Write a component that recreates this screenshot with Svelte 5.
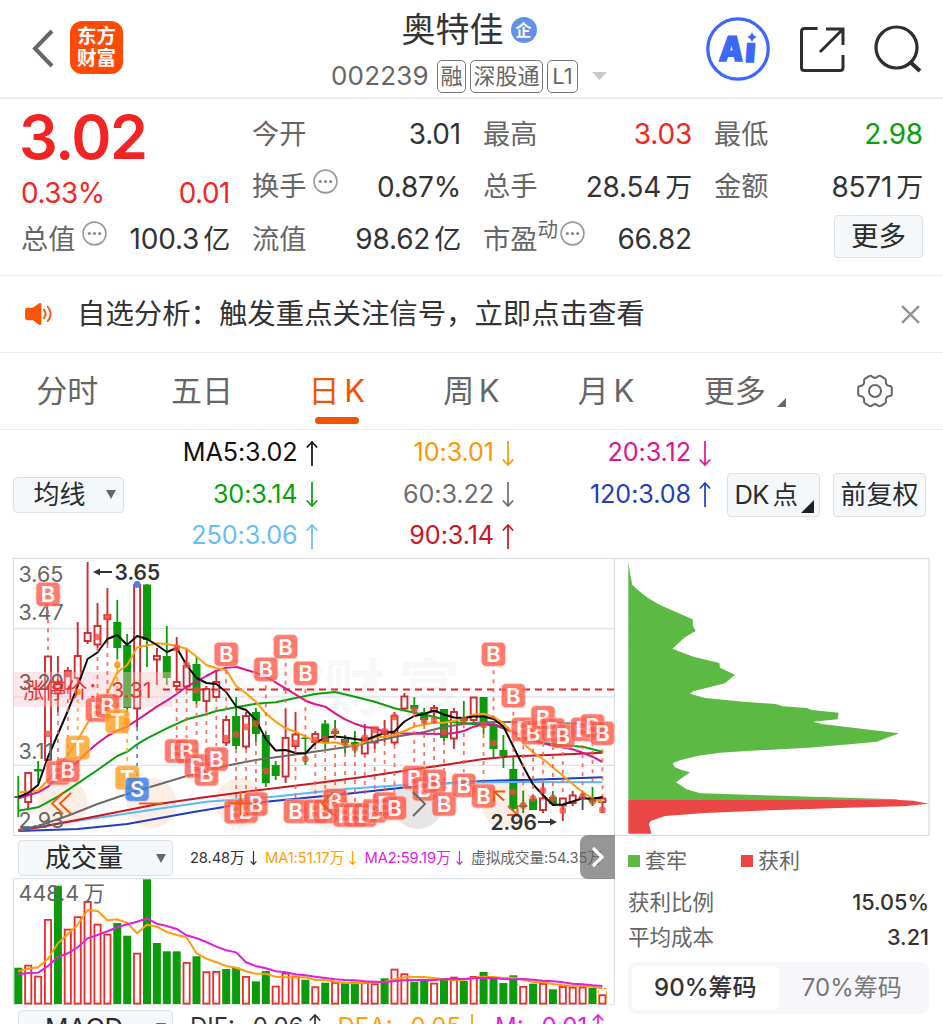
<script>
	const quotes = [
		{ label: '今开', value: '3.01' },
		{ label: '最高', value: '3.03', tone: 'up' },
		{ label: '最低', value: '2.98', tone: 'down' },
		{ label: '换手', value: '0.87%', hint: true },
		{ label: '总手', value: '28.54', unit: '万' },
		{ label: '金额', value: '8571', unit: '万' },
		{ label: '流值', value: '98.62', unit: '亿' },
		{ label: '市盈', sup: '动', value: '66.82', hint: true }
	];

	const tabs = ['分时', '五日', '日 K', '周 K', '月 K', '更多'];
	let activeTab = $state(2);
	let chipRange = $state(90);

	const averages = [
		{ text: 'MA5:3.02', up: true, color: '#111111' },
		{ text: '10:3.01', up: false, color: '#ff9500' },
		{ text: '20:3.12', up: false, color: '#e0148c' },
		{ text: '30:3.14', up: false, color: '#0aa00a' },
		{ text: '60:3.22', up: false, color: '#6e6e6e' },
		{ text: '120:3.08', up: true, color: '#1f3cc4' },
		{ text: '250:3.06', up: true, color: '#66bdfa' },
		{ text: '90:3.14', up: true, color: '#cc1522' }
	];

	const x = (i) => 18.3 + 9.9 * i;

	// [color, high, top, bottom, low]
	const candles = [
		['g', 776, 796, 798, 817], ['r', 772, 773, 802, 808], ['g', 761, 769, 771.5, 783], ['r', 656, 656.5, 760, 760],
		['r', 656, 682, 693, 712], ['r', 667, 671, 689, 690], ['r', 622, 656, 678, 681], ['r', 562, 633, 641, 644],
		['r', 603, 626, 644.5, 648], ['r', 588, 615, 619, 644], ['g', 600, 622, 648, 659], ['g', 634, 645, 708, 712],
		['r', 584, 585, 708.5, 727], ['g', 584, 584.5, 640, 667], ['r', 648, 656, 659.5, 685], ['g', 626, 656, 678, 685],
		['r', 637, 682, 686, 690], ['r', 649, 666, 686.5, 690], ['g', 656, 664, 701, 704], ['r', 686, 689, 701, 712],
		['r', 671, 682, 697, 698], ['r', 716, 720, 742.5, 746], ['g', 697, 716, 746, 749], ['r', 712, 716, 746.5, 749],
		['g', 708, 712, 734, 742], ['g', 732, 735, 783, 787], ['g', 761, 765, 776, 780], ['r', 709, 738, 776.5, 783],
		['r', 712, 734.5, 746, 749], ['g', 735, 737.5, 739, 765], ['r', 731, 734, 742, 745], ['g', 720, 723.5, 742, 749],
		['g', 720, 731, 734, 736], ['g', 735, 739, 743, 753], ['g', 731, 742, 746.5, 753], ['r', 724, 738, 753.5, 754],
		['r', 727, 727.5, 742.5, 749], ['r', 720, 731, 734, 742], ['r', 712, 716, 742.5, 745], ['r', 693, 696.5, 708.5, 710],
		['g', 697, 705, 709, 713], ['g', 708, 712, 720, 725], ['r', 705, 708, 711.5, 720], ['g', 709, 709, 738, 741],
		['r', 708, 712, 738.5, 749], ['g', 701, 718, 721, 724], ['r', 697, 697.5, 720, 723], ['g', 697, 697, 724, 734],
		['g', 723, 724, 749, 757], ['g', 735, 750, 756, 768], ['g', 757, 769, 809, 810], ['g', 791, 805, 807, 813],
		['g', 796, 799, 810, 810], ['r', 783, 798.5, 810, 813], ['g', 791, 797, 804, 806], ['r', 798, 798.5, 805.5, 821],
		['r', 791, 795.5, 803, 806], ['k', 793, 797, 798.5, 810], ['g', 787, 797, 802, 806], ['r', 796, 798.5, 802, 813]
	];

	const ma5 = [
		797, 793, 785, 757, 734, 711, 686, 659, 652.5, 639, 635, 645, 636, 639, 645, 652, 648, 665, 678, 683, 684, 692, 706.5,
		710, 720, 739, 750.5, 750, 753, 753.5, 743, 737.5, 736.5, 737.5, 739, 740.3, 736.5, 733, 731.5, 721.5, 716, 714, 710.5,
		714.5, 717.5, 718, 716.5, 716.5, 719, 726.5, 746.5, 766.5, 784.5, 795, 805, 804.5, 801.5, 798.3, 799, 797
	];
	const ma10 = [
		792.5, 791.5, 790.5, 780, 767, 755, 740, 723, 708, 693, 672.5, 665, 647.5, 645.5, 643.3, 644, 646, 648.7, 656.7, 665,
		668.3, 670, 686, 693.3, 701.7, 713.3, 721.7, 728.3, 731.7, 736.7, 741, 743.3, 742.3, 745, 745.7, 741.7, 737.3, 736.7,
		735, 731, 726.5, 724.5, 722.7, 722.7, 720.7, 718.3, 714.7, 713.7, 716.7, 723.3, 733.3, 743.3, 752.3, 759, 767.3, 775.7,
		784, 792.3, 798.3, 801.7
	];

	const every = (ys) => ys.map((y, i) => `${x(i)},${y}`).join(' ');
	const sparse = (pairs) => pairs.map(([i, y]) => `${x(i)},${y}`).join(' ');

	const lines = [
		{ color: '#1f3cc4', points: sparse([[0, 831], [6, 829], [11, 824], [16, 815], [18, 811.5], [22, 805], [26, 800.7], [33, 794], [39, 787.5], [43, 783.5], [47, 781], [52, 779.7], [59, 777.3]]) },
		{ color: '#5bb8f8', points: sparse([[0, 830.5], [5, 822], [10, 815], [14, 809], [19, 801.7], [26, 796.5], [33, 789], [39, 785], [43, 783.3], [50, 782], [59, 782.3]]) },
		{ color: '#c81624', points: sparse([[0, 830], [2, 827.5], [8, 816], [14, 804.3], [19, 797], [24, 790.5], [30, 783.3], [35, 776.7], [39, 770.7], [43, 765], [47, 759], [50, 756.3], [53, 755.3], [59, 752.7]]) },
		{ color: '#6b6b6b', points: sparse([[0, 830], [2, 826], [5, 815.7], [8, 804], [10, 797.3], [12, 790.7], [14, 785], [17, 776], [21, 765.7], [24, 760], [28, 754.5], [33, 747.3], [36, 741.5], [38, 737], [41, 732], [43, 727], [45, 724], [47, 722.3], [50, 722], [55, 723.3], [59, 724]]) },
		{ color: '#0aa00a', points: sparse([[0, 810.7], [2, 807.3], [4, 796.7], [6, 783.3], [8, 770], [10, 756], [11, 751.7], [12, 744.3], [13, 738.3], [15, 728.3], [17, 719.3], [19, 714.3], [20, 711], [22, 707.3], [24, 703.7], [26, 702.3], [28, 698], [30, 694], [32, 692], [34, 696.7], [36, 701.7], [38, 708.3], [40, 712.7], [42, 716.7], [44, 722.3], [46, 724], [48, 725], [49, 728.3], [51, 736.7], [53, 742.7], [55, 745.3], [57, 746.7], [59, 751.7]]) },
		{ color: '#d9148c', points: sparse([[0, 798.3], [2, 792.3], [3, 786.7], [4, 776.7], [6, 761.7], [7, 751.7], [8, 743.3], [9, 736], [10, 730.7], [11, 726.7], [12, 720], [13, 713.3], [14, 706.7], [15, 700.7], [16, 694], [17, 686.7], [18, 681.7], [19, 676], [20, 670.7], [21, 667.7], [22, 666.7], [24, 672.7], [25, 676.7], [27, 688.3], [29, 700.7], [30, 704.3], [31, 706.7], [32, 713.3], [33, 719.3], [34, 723.7], [35, 727], [36, 728.3], [37, 731.7], [38, 733.3], [43, 734], [44, 733], [45, 731], [46, 726.7], [47, 724.3], [48, 724.3], [49, 727.7], [50, 731.7], [51, 736.7], [52, 740.7], [54, 745.7], [56, 749.3], [57, 752.7], [58, 756.7], [59, 762]]) },
		{ color: '#ff9d0a', points: every(ma10) },
		{ color: '#0a0a0a', points: every(ma5) }
	];

	// [candle index, center y, letter]
	const markers = [
		[3, 594.3, 'B'], [4, 773, 'B'], [5, 770, 'B'], [6, 747.7, 'T'], [8, 710, 'B'], [9, 706, 'B'], [10, 721.3, 'T'],
		[11, 777.7, 'T'], [12, 789.3, 'S'], [16, 751, 'B'], [17, 751.3, 'B'], [18, 766, 'B'], [19, 774, 'B'], [20, 759, 'B'],
		[21, 654.3, 'B'], [22, 811.7, 'B'], [23, 811, 'B'], [24, 804, 'B'], [25, 669.3, 'B'], [27, 646.7, 'B'],
		[28, 811.3, 'B'], [29, 673.3, 'B'], [30, 811.3, 'B'], [31, 811.3, 'B'], [32, 800.7, 'B'], [33, 815, 'B'],
		[34, 815, 'B'], [35, 815, 'B'], [36, 811, 'B'], [37, 804, 'B'], [38, 808, 'B'], [40, 777.7, 'B'], [41, 789, 'B'],
		[42, 781.3, 'B'], [43, 804, 'B'], [45, 785.3, 'B'], [47, 796, 'B'], [48, 654.3, 'B'], [50, 695.7, 'B'],
		[51, 729.3, 'B'], [52, 732.7, 'B'], [53, 717.7, 'B'], [54, 730, 'B'], [55, 736, 'B'], [57, 729.3, 'B'],
		[58, 726, 'B'], [59, 733.3, 'B']
	];
	const markerColor = { B: '#ff5a48', T: '#ff9f1c', S: '#2f7df0' };

	function stem([i, y]) {
		const [, high, , , low] = candles[i];
		return y < high ? { y1: y + 16, y2: high } : { y1: low, y2: y - 13 };
	}

	const dots = [
		[3, 734], [5, 674], [8, 637], [9, 617], [16, 648], [17, 665], [18, 690.5], [21, 738], [22, 734.5], [23, 727], [24, 723.5],
		[25, 771], [28, 743], [29, 759], [30, 740], [31, 739], [32, 731.5], [33, 742.5], [34, 748], [35, 738], [36, 730],
		[37, 731.5], [38, 717], [40, 710], [41, 721], [42, 720], [43, 732], [45, 720], [47, 725], [48, 743], [50, 792],
		[51, 805.5], [52, 798.5], [53, 790.5], [54, 798], [55, 810.5], [57, 796.5], [58, 801.5], [59, 810]
	];

	const priceLabels = [
		['3.65', 582], ['3.47', 620.3], ['3.29', 689.7], ['3.11', 758.5], ['2.93', 827.5]
	];

	const volumeTops = [
		967.7, 964.7, 975.7, 919, 885.7, 928.7, 916.3, 901, 923.7, 933.7, 923, 935.7, 952.7, 879.3, 943, 951.3, 951.3, 962,
		956.3, 971.3, 971, 969, 967.7, 976, 981.3, 971, 985.7, 972.7, 975.7, 979.7, 986.3, 982.7, 982, 983.3, 981.7, 982.3,
		983.3, 978.3, 968.7, 973.3, 981.7, 981, 982.7, 978, 976.7, 981, 976, 972, 978.7, 983, 975.3, 986, 983.7, 983, 989.3,
		986, 986.7, 986.7, 988, 994.3
	];
	const volumeColors = 'grrrgrrrrrggrggggrgrrggrggrrrgrgrggrrgrrggrgrgrggggrgrgrrrgr';
	const volumeMa1 = [
		971.3, 968.7, 967.3, 958.7, 943.3, 934.3, 924.7, 910, 911, 920.3, 919.3, 923, 933.3, 924.7, 926.7, 932, 935, 937.3,
		953.3, 958.7, 962.3, 966, 967.7, 971.3, 973.7, 973.7, 976.7, 977.3, 977.3, 977.3, 980, 980, 981.7, 982.7, 983.3, 982.7,
		982.3, 981.7, 979.3, 977.3, 977, 977, 978, 979.3, 980, 979.7, 978, 976.7, 977, 978, 977.7, 979.7, 982, 982.3, 984,
		985.3, 985.7, 986, 986.7, 988.3
	];
	const volumeMa2 = [
		974.3, 973, 972.7, 966, 957, 953.3, 947.3, 938.3, 935, 931.3, 927.3, 924.3, 921.7, 918.3, 923.7, 926, 929, 935.3,
		938.3, 942, 946.7, 950.3, 952.3, 962.3, 966, 968.3, 971.3, 972.3, 974.3, 975.3, 976.7, 978, 979.3, 980, 980.3, 981.3,
		981.7, 982, 981, 980.3, 980, 980, 980, 979.3, 979, 979, 978.3, 977.7, 978, 979, 979.3, 979, 979.7, 980.7, 981.3,
		982.3, 983.7, 984.3, 985.3, 986
	];
</script>

{#snippet arrow(up)}
	<svg class="arrow" class:flip={!up} viewBox="0 0 12 25">
		<path d="M6 25V1M0.8 6.5L6 1l5.2 5.5" />
	</svg>
{/snippet}

{#snippet hint()}
	<svg class="hint" viewBox="0 0 25 25">
		<circle cx="12.5" cy="12.5" r="11.4" fill="none" stroke="#999" stroke-width="1.6" />
		<g fill="#888"><circle cx="7.3" cy="12.5" r="1.6" /><circle cx="12.5" cy="12.5" r="1.6" /><circle cx="17.7" cy="12.5" r="1.6" /></g>
	</svg>
{/snippet}

<div class="page">
	<header class="header">
		<div class="header__left">
			<svg class="back" viewBox="0 0 24 40"><path d="M21 2L4 19.500L21 37" fill="none" stroke="#666" stroke-width="4" /></svg>
			<div class="brand"><span>东方</span><span>财富</span></div>
		</div>
		<div class="header__center">
			<div class="name">奥特佳<span class="name__badge">企</span></div>
			<div class="code">
				<span class="code__num">002239</span>
				<span class="tag">融</span>
				<span class="tag tag--wide">深股通</span>
				<span class="tag tag--level">L1</span>
				<svg class="code__caret" viewBox="0 0 15 8"><path d="M0 0h15L7.500 8z" fill="#c9c9c9" /></svg>
			</div>
		</div>
		<div class="header__right">
			<svg width="64" height="64" viewBox="0 0 64 64">
				<circle cx="32" cy="32" r="30.200" fill="none" stroke="#3b68fb" stroke-width="3.300" />
				<g class="ai">
					<text transform="translate(12.500 44) skewX(-4) scale(0.900 1)">A</text>
					<text transform="translate(38.500 44.500) skewX(-4) scale(1.050 1)">ı</text>
				</g>
				<path d="M46 15q1.200 4 5 5q-3.800 1-5 5q-1.200-4-5-5q3.800-1 5-5z" fill="#3b68fb" />
			</svg>
			<svg width="46" height="46" viewBox="0 0 46 46" fill="none" stroke="#2e2e2e" stroke-width="3">
				<path d="M18.500 2.500H5.500q-3 0-3 3v36q0 3 3 3H41q3 0 3-3V29" />
				<path d="M27 3h17v16M43 4L21 26" />
			</svg>
			<svg width="48" height="48" viewBox="0 0 48 48" fill="none" stroke="#2e2e2e" stroke-width="3.200">
				<circle cx="22.500" cy="22.500" r="20.500" />
				<path d="M35.500 36.500L46 46" stroke-width="4" />
			</svg>
		</div>
	</header>

	<section class="quote">
		<div class="price">
			<strong>3.02</strong>
			<div class="price__change"><span>0.33%</span><span>0.01</span></div>
			<div class="cell">
				<span class="cell__label">总值{@render hint()}</span>
				<span class="cell__value">100.3<i>亿</i></span>
			</div>
		</div>
		<div class="quote__grid">
			{#each quotes as q}
				<div class="cell">
					<span class="cell__label">
						{q.label}{#if q.sup}<sup>{q.sup}</sup>{/if}{#if q.hint}{@render hint()}{/if}
					</span>
					<span class="cell__value {q.tone ?? ''}">{q.value}{#if q.unit}<i>{q.unit}</i>{/if}</span>
				</div>
			{/each}
			<button class="btn btn--more">更多</button>
		</div>
	</section>

	<section class="notice">
		<svg class="notice__horn" viewBox="0 0 30 24">
			<path d="M2.500 5.500H8L14.500 0.800q2.500-1 2.500 1.500v19.400q0 2.500-2.500 1.500L8 18.500H2.500Q0 18.500 0 16V8Q0 5.500 2.500 5.500z" fill="#fb5607" />
			<path d="M19.500 7.500q3.600 4.500 0 9M23.500 4.500q6 7.500 0 15" fill="none" stroke="#fb5607" stroke-width="2" stroke-linecap="round" />
		</svg>
		<p>自选分析：触发重点关注信号，立即点击查看</p>
		<svg class="notice__close" viewBox="0 0 18 18"><path d="M1 1l16 16M17 1L1 17" stroke="#929292" stroke-width="2.200" /></svg>
	</section>

	<nav class="tabs">
		{#each tabs as tab, i}
			<button class="tab" class:is-active={activeTab === i} class:tab--more={tab === '更多'} onclick={() => (activeTab = i)}>
				{tab}
				{#if tab === '更多'}
					<svg class="tab__corner" viewBox="0 0 9 9"><path d="M9 0v9H0z" fill="#666" /></svg>
				{/if}
			</button>
		{/each}
		<div class="tab tab--gear">
			<svg width="36" height="34" viewBox="0 0 36 34" fill="none" stroke="#666" stroke-width="2">
				<path d="M12.200 2.200Q13.800 1 15 2.600Q18 5.200 21 2.600Q22.200 1 23.800 2.200L28 4.700Q29.300 5.600 28.800 7.500Q28.800 11.500 32.800 12Q34.800 12.300 34.800 14V20Q34.800 21.700 32.800 22Q28.800 22.500 28.800 26.500Q29.300 28.400 28 29.300L23.800 31.800Q22.200 33 21 31.400Q18 28.800 15 31.400Q13.800 33 12.200 31.800L8 29.300Q6.700 28.400 7.200 26.500Q7.200 22.500 3.200 22Q1.200 21.700 1.200 20V14Q1.200 12.300 3.200 12Q7.200 11.500 7.200 7.500Q6.700 5.600 8 4.700Z" />
				<circle cx="18" cy="17" r="6" />
			</svg>
		</div>
	</nav>

	<section class="ma">
		<button class="btn btn--ma">均线<span class="caret"></span></button>
		<div class="ma__grid">
			{#each averages as a}
				<span class="ma__item" style={`color: ${a.color}`}>{a.text}{@render arrow(a.up)}</span>
			{/each}
		</div>
		<button class="btn btn--tool btn--dk">DK 点<span class="corner"></span></button>
		<button class="btn btn--tool">前复权</button>
	</section>

	<div class="charts">
		<div class="charts__main">
			<svg class="kline" viewBox="13 558 602 278">
				<rect x="13.500" y="558.500" width="601" height="277" fill="#fff" stroke="#dadee4" />
				<g class="watermark">
					<circle cx="189" cy="706" r="19" />
					<text x="206" y="711">东</text>
					<text x="264" y="711">方</text>
					<text x="323" y="711">财</text>
					<text x="398" y="711">富</text>
				</g>
				<g stroke="#dfe3ec" stroke-width="1.300">
					<line x1="14" x2="614" y1="628.500" y2="628.500" />
					<line x1="14" x2="614" y1="696.800" y2="696.800" />
					<line x1="14" x2="614" y1="765.400" y2="765.400" />
				</g>
				<g fill="#fdeee5">
					<circle cx="62.500" cy="803" r="25" />
					<circle cx="151.500" cy="803" r="25" />
					<circle cx="240.500" cy="803" r="25" />
					<circle cx="329.500" cy="803" r="25" />
					<circle cx="506" cy="803" r="25" />
					<circle cx="418" cy="804" r="25" fill="#e6e6e6" />
				</g>

				{#each candles as [color, high, top, bottom, low], i}
					{#if color === 'r'}
						<g stroke="#cf2a30" stroke-width="1.900" fill="#fff">
							<line x1={x(i)} x2={x(i)} y1={high} y2={low} />
							<rect x={x(i) - 3} y={top} width="6" height={bottom - top} />
						</g>
					{:else}
						<g fill={color === 'g' ? '#0a9c0a' : '#444'} stroke={color === 'g' ? '#0a9c0a' : '#444'}>
							<line x1={x(i)} x2={x(i)} y1={high} y2={low} stroke-width="1.800" />
							<rect x={x(i) - 4} y={top} width="8" height={bottom - top} stroke="none" />
						</g>
					{/if}
				{/each}

				<rect x="14" y="672" width="158" height="35" fill="#fbc4c8" opacity="0.420" />
				<line x1="163" x2="614" y1="689.500" y2="689.500" stroke="#ee1c28" stroke-width="2" stroke-dasharray="7 5" />

				{#each lines as l}
					<polyline points={l.points} fill="none" stroke={l.color} stroke-width="2" stroke-linejoin="round" />
				{/each}

				<g class="axis">
					{#each priceLabels as [text, y]}
						<text x="18.500" {y}>{text}</text>
					{/each}
				</g>

				{#each markers as m}
					{@const s = stem(m)}
					<line x1={x(m[0])} x2={x(m[0])} y1={s.y1} y2={s.y2} stroke={markerColor[m[2]]} stroke-width="1.800" stroke-dasharray="4 5" opacity="0.850" />
				{/each}
				{#each dots as [i, y]}
					{#if candles[i][0] === 'r'}
						<rect x={x(i) - 3.2} y={y - 3.2} width="6.400" height="6.400" rx="1.500" fill="#f4503f" opacity="0.800" />
					{:else}
						<circle cx={x(i)} cy={y} r="3.400" fill="#e0503a" opacity="0.800" />
					{/if}
				{/each}
				<circle cx={x(12)} cy="584.500" r="3.400" fill="#4a7fe6" />
				<g fill="#ff9f1c">
					<circle cx={x(6)} cy="692" r="3.200" />
					<circle cx={x(10)} cy="665" r="3.200" />
					<circle cx={x(11)} cy="721.500" r="3.200" />
				</g>

				<text class="limit" x="23" y="698">涨停价：</text>
				<text class="limit" x="111" y="698">3.31</text>

				{#each markers as [i, y, letter]}
					<g class="marker">
						<rect x={x(i) - 12} y={y - 12} width="24" height="24" rx="4.500" fill={markerColor[letter]} />
						<text x={x(i)} y={y + 7.8}>{letter}</text>
					</g>
				{/each}

				<g fill="none" stroke="#ee5a10" stroke-width="1.900">
					<path d="M63 793L52 803.500L63 814M71 793L60 803.500L71 814" />
					<path d="M139 803.500h24" />
					<path d="M228.500 803.500h24M240.500 791.500v24" />
					<path d="M333 792L322 803.500L333 815" />
					<path d="M494 802V791.500H505M494 791.500L504 800.500M507 815H517.500V805M517.500 815L508 806" />
					<path d="M413 792L425 804L413 816" stroke="#666" />
				</g>

				<g class="extreme">
					<text x="114.500" y="579.500">3.65</text>
					<text x="490.500" y="829.500">2.96</text>
					<path d="M112 572H96M538 822H553" />
					<path class="extreme__head" d="M93 572l7-3.500v7zM557 822l-7-3.500v7z" />
				</g>
			</svg>

			<div class="indicator">
				<button class="btn btn--indicator">成交量<span class="caret"></span></button>
				<div class="indicator__values">
					<span>28.48万{@render arrow(false)}</span>
					<span class="is-orange">MA1:51.17万{@render arrow(false)}</span>
					<span class="is-purple">MA2:59.19万{@render arrow(false)}</span>
					<span class="is-gray">虚拟成交量:54.35万</span>
				</div>
				<div class="drawer">
					<svg viewBox="0 0 12 20"><path d="M2 2l8 8l-8 8" fill="none" stroke="#fff" stroke-width="3.200" stroke-linecap="round" /></svg>
				</div>
			</div>

			<svg class="volume" viewBox="13 878 602 127">
				<path d="M13.500 878.700V1004.300H614.500V878.700z" fill="#fff" stroke="#dadee4" />
				{#each volumeTops as top, i}
					{#if volumeColors[i] === 'r'}
						<rect x={x(i) - 3.1} y={top + 0.9} width="6.200" height={1002.7 - top} fill="#fff" stroke="#ee2a2a" stroke-width="1.800" />
					{:else}
						<rect x={x(i) - 4} y={top} width="8" height={1004 - top} fill="#0a9c0a" />
					{/if}
				{/each}
				<path d="M598.500 1003V988.500H606.500V1003" fill="none" stroke="#ff9d0a" stroke-dasharray="3 2" />
				<polyline points={every(volumeMa1)} fill="none" stroke="#ff9d0a" stroke-width="2" />
				<polyline points={every(volumeMa2)} fill="none" stroke="#e020e0" stroke-width="2" />
				<g class="axis"><text x="18.500" y="901">448.4</text><text x="83.500" y="901">万</text></g>
			</svg>

			<div class="indicator indicator--macd">
				<button class="btn btn--indicator">MACD<span class="caret"></span></button>
				<div class="macd">
					<span>DIF: -0.06{@render arrow(true)}</span>
					<span class="is-orange">DEA: -0.05{@render arrow(false)}</span>
					<span class="is-purple">M: -0.01{@render arrow(true)}</span>
				</div>
			</div>
		</div>

		<aside class="chips">
			<svg class="chips__chart" viewBox="15 24 945 834">
				<path d="M15 25.500H957V856H15" fill="none" stroke="#dadee4" stroke-width="4" />
				<polygon fill="#5cb944" points="55,35 60,70 67,105 88,124 115,145 150,165 225,198 248,208 249,228 257,243 225,262 187,296 250,320 328,339 330,353 375,374 345,400 250,424 240,431 285,444 400,455 497,462 518,469 590,474 605,480 686,488 683,508 608,515 635,522 710,531 867,550 800,575 720,583 595,593 410,603 330,608 265,617 210,631 188,640 195,652 215,660 240,667 198,697 230,718 270,730 860,748 870,751 55,751" />
				<polygon fill="#ea4646" points="55,750 870,750 910,752 956,761 880,769 760,772 445,782 285,789 165,798 122,813 117,822 124,851 55,851" />
			</svg>
			<div class="legend">
				<span class="legend__item">套牢</span>
				<span class="legend__item legend__item--win">获利</span>
			</div>
			<dl class="stats">
				<div><dt>获利比例</dt><dd>15.05%</dd></div>
				<div><dt>平均成本</dt><dd>3.21</dd></div>
			</dl>
			<div class="switch">
				<button class:is-active={chipRange === 90} onclick={() => (chipRange = 90)}>90%筹码</button>
				<button class:is-active={chipRange === 70} onclick={() => (chipRange = 70)}>70%筹码</button>
			</div>
		</aside>
	</div>
</div>

<style>
	:global(body) {
		background: #fff;
	}

	.page {
		width: 943px;
		height: 1024px;
		overflow: hidden;
		background: #fff;
		color: #333;
		font-family: Inter, 'Noto Sans CJK SC', sans-serif;
		line-height: 1;
		box-sizing: border-box;
	}

	.page :global(*) {
		box-sizing: border-box;
	}

	button {
		margin: 0;
		padding: 0;
		border: 0;
		background: none;
		color: inherit;
		font: inherit;
		white-space: nowrap;
	}

	svg {
		display: block;
		flex: none;
	}

	.header {
		display: grid;
		grid-template-columns: 331px 276px 1fr;
		height: 99px;
		border-bottom: 2px solid #ececec;
	}

	.header__left {
		display: flex;
		align-items: center;
		gap: 15px;
		padding-left: 31px;
	}

	.back {
		width: 24px;
		height: 40px;
	}

	.brand {
		display: flex;
		flex-direction: column;
		align-items: center;
		justify-content: center;
		gap: 2px;
		width: 53px;
		height: 53px;
		margin-top: -2px;
		border-radius: 12px;
		background: #ff4a05;
		color: #fff;
		font-size: 19.5px;
		font-weight: 700;
	}

	.header__center {
		padding-top: 13px;
	}

	.name {
		display: flex;
		align-items: center;
		justify-content: center;
		gap: 7px;
		height: 34px;
		font-size: 34px;
	}

	.name__badge {
		display: grid;
		place-items: center;
		width: 26px;
		height: 26px;
		border-radius: 50%;
		background: #6390e8;
		color: #fff;
		font-size: 16px;
		font-weight: 700;
	}

	.code {
		display: flex;
		align-items: center;
		height: 32px;
		margin-top: 13px;
		color: #666;
	}

	.code__num {
		width: 106px;
		font-size: 26px;
		letter-spacing: 0.2px;
	}

	.tag {
		display: grid;
		place-items: center;
		width: 29px;
		height: 33px;
		margin-right: 4px;
		border: 1.5px solid #777;
		border-radius: 5px;
		font-size: 22px;
	}

	.tag--wide {
		width: 73px;
	}

	.tag--level {
		width: 31px;
	}

	.code__caret {
		width: 15px;
		height: 8px;
		margin-left: 10px;
	}

	.header__right {
		display: flex;
		align-items: center;
		gap: 29px;
		padding-left: 99px;
	}

	.ai {
		fill: #3b68fb;
		stroke: #3b68fb;
		stroke-width: 1.4;
		font-size: 34px;
		font-weight: 900;
	}

	.quote {
		display: flex;
		gap: 22px;
		height: 177px;
		padding: 9px 20px 0 21px;
		border-bottom: 1px solid #eee;
	}

	.price {
		width: 209px;
		color: #f52424;
	}

	.price strong {
		display: block;
		height: 58px;
		margin-left: -2px;
		font-size: 61px;
		font-weight: 600;
		line-height: 58px;
		letter-spacing: -1.5px;
	}

	.price__change {
		display: flex;
		align-items: center;
		justify-content: space-between;
		height: 47px;
		padding-top: 9px;
		font-size: 27.8px;
		letter-spacing: -0.4px;
	}

	.quote__grid {
		display: grid;
		grid-template-columns: repeat(3, 209px);
		grid-template-rows: repeat(3, 52.5px);
		column-gap: 22px;
	}

	.cell {
		display: flex;
		align-items: center;
		justify-content: space-between;
		height: 52.5px;
		font-size: 27.2px;
		white-space: nowrap;
	}

	.cell__label {
		display: flex;
		align-items: center;
		color: #666;
	}

	.cell__label sup {
		align-self: flex-start;
		margin-top: -6px;
		font-size: 20.5px;
		line-height: 20px;
	}

	.cell__value {
		color: #333;
		font-size: 28px;
		letter-spacing: -0.2px;
	}

	.cell__value i {
		margin-left: 4px;
		font-size: 27px;
		font-style: normal;
	}

	.cell__value.up {
		color: #f52424;
	}

	.cell__value.down {
		color: #0aa00a;
	}

	.hint {
		width: 25px;
		height: 25px;
		margin: -11px 0 0 7px;
	}

	sup + .hint {
		margin-left: 2px;
	}

	.btn {
		display: flex;
		align-items: center;
		justify-content: center;
		border: 1.5px solid #dde1e5;
		border-radius: 4px;
		background: #f5f8fa;
		color: #2b2b2b;
	}

	.btn--more {
		width: 89px;
		height: 43px;
		place-self: start end;
		margin-top: 2px;
		font-size: 27.5px;
	}

	.notice {
		display: flex;
		align-items: center;
		height: 77px;
		padding: 0 23px 0 25px;
		border-bottom: 1px solid #eee;
	}

	.notice__horn {
		width: 29px;
		height: 24px;
	}

	.notice p {
		flex: 1;
		margin: 0 0 0 23px;
		font-size: 28.4px;
		white-space: nowrap;
	}

	.notice__close {
		width: 19px;
		height: 19px;
	}

	.tabs {
		display: flex;
		height: 77px;
		border-bottom: 1px solid #eee;
	}

	.tab {
		display: flex;
		align-items: center;
		justify-content: center;
		position: relative;
		width: 134.7px;
		padding-bottom: 1px;
		color: #666;
		font-size: 31px;
		word-spacing: -4px;
	}

	.tab--more {
		padding-right: 12px;
	}

	.tab.is-active {
		color: #ee5404;
	}

	.tab.is-active::after {
		content: '';
		position: absolute;
		bottom: 5px;
		left: 46px;
		width: 44px;
		height: 7px;
		border-radius: 3.5px;
		background: #ee5404;
	}

	.tab__corner {
		position: absolute;
		right: 22px;
		bottom: 22px;
		width: 9px;
		height: 9px;
	}

	.ma {
		display: flex;
		align-items: center;
		height: 128px;
		padding: 1px 0 0 13px;
	}

	.btn--ma {
		gap: 20px;
		width: 111px;
		height: 36px;
		padding-left: 12px;
		font-size: 26px;
	}

	.caret {
		border: 5.5px solid transparent;
		border-top: 9px solid #666;
		border-bottom: 0;
	}

	.ma__grid {
		display: grid;
		grid-template-columns: 193.5px 196.5px 197px;
		grid-template-rows: repeat(3, 41.5px);
		width: 603px;
	}

	.ma__item {
		display: flex;
		align-items: center;
		justify-content: flex-end;
		gap: 8px;
		font-size: 25.2px;
		letter-spacing: -0.1px;
	}

	.arrow {
		width: 12px;
		height: 25px;
		overflow: visible;
		fill: none;
		stroke: currentColor;
		stroke-width: 1.7;
	}

	.arrow.flip {
		transform: scaleY(-1);
	}

	.btn--tool {
		position: relative;
		width: 93px;
		height: 44px;
		margin-right: 13px;
		font-size: 26px;
	}

	.btn--dk {
		padding-right: 15px;
		font-size: 25.5px;
		letter-spacing: -0.5px;
		word-spacing: -3px;
	}

	.corner {
		position: absolute;
		right: 5px;
		bottom: 3px;
		border-bottom: 13px solid #222;
		border-left: 13px solid transparent;
	}

	.charts {
		display: flex;
	}

	.charts__main {
		width: 602px;
		margin-left: 13px;
	}

	.kline {
		width: 602px;
		height: 278px;
	}

	.axis text {
		fill: #666;
		font-size: 21.5px;
	}

	.watermark {
		fill: #f8f8f8;
		font-size: 62px;
		font-weight: 700;
	}

	.limit {
		fill: #f03030;
		font-size: 21.5px;
	}

	.marker {
		opacity: 0.8;
	}

	.marker rect {
		stroke: #ffc4bc;
		stroke-width: 0.8;
	}

	.marker text {
		fill: #fff;
		font-size: 22px;
		font-weight: 600;
		text-anchor: middle;
	}

	.extreme text {
		fill: #333;
		font-size: 21px;
		font-weight: 600;
	}

	.extreme path {
		fill: none;
		stroke: #333;
		stroke-width: 2;
	}

	.extreme .extreme__head {
		fill: #333;
		stroke: none;
	}

	.indicator {
		display: flex;
		align-items: center;
		position: relative;
		height: 42px;
		padding-left: 5px;
	}

	.btn--indicator {
		justify-content: space-between;
		width: 155px;
		height: 36px;
		margin-top: 2px;
		padding: 0 6px 0 26px;
		font-size: 26px;
	}

	.indicator__values {
		display: flex;
		gap: 8.5px;
		margin: 2px 0 0 17px;
		font-size: 14.7px;
		letter-spacing: -0.1px;
		white-space: nowrap;
	}

	.indicator__values span {
		display: flex;
		align-items: center;
		gap: 5px;
	}

	.indicator__values .arrow {
		width: 7px;
		height: 14px;
		stroke-width: 2.2;
	}

	.indicator .is-orange {
		color: #ff9d0a;
	}

	.indicator .is-purple {
		color: #e020e0;
	}

	.indicator .is-gray {
		color: #666;
	}

	.drawer {
		display: grid;
		place-items: center;
		position: absolute;
		top: -1px;
		right: 0;
		width: 35px;
		height: 44px;
		border-radius: 8px 0 0 8px;
		background: rgba(100, 100, 100, 0.68);
	}

	.drawer svg {
		width: 12px;
		height: 20px;
	}

	.volume {
		width: 602px;
		height: 127px;
	}

	.indicator--macd {
		padding-top: 1px;
	}

	.macd {
		display: flex;
		gap: 17px;
		margin-left: 17px;
		font-size: 24px;
		white-space: pre;
	}

	.macd span {
		display: flex;
		align-items: center;
		gap: 5px;
	}

	.chips {
		width: 315px;
	}

	.chips__chart {
		width: 315px;
		height: 278px;
	}

	.legend {
		display: flex;
		gap: 54px;
		height: 49px;
		padding-left: 13px;
	}

	.legend__item {
		display: flex;
		align-items: center;
		gap: 5px;
		color: #666;
		font-size: 21px;
	}

	.legend__item::before {
		content: '';
		width: 12px;
		height: 12px;
		background: #5cb944;
	}

	.legend__item--win::before {
		background: #ea4646;
	}

	.stats {
		margin: 0;
		padding: 0 1px 0 13px;
	}

	.stats div {
		display: flex;
		align-items: center;
		justify-content: space-between;
		height: 35px;
	}

	.stats dt {
		color: #666;
		font-size: 21.5px;
	}

	.stats dd {
		margin: 0;
		font-size: 21.7px;
		font-weight: 500;
	}

	.switch {
		display: flex;
		height: 52px;
		margin: 7px 1px 0 13px;
		padding: 4px;
		border-radius: 8px;
		background: #f7f7fb;
	}

	.switch button {
		flex: 1;
		border-radius: 6px;
		color: #777;
		font-size: 24px;
	}

	.switch .is-active {
		background: #fff;
		color: #333;
		font-weight: 500;
	}
</style>
